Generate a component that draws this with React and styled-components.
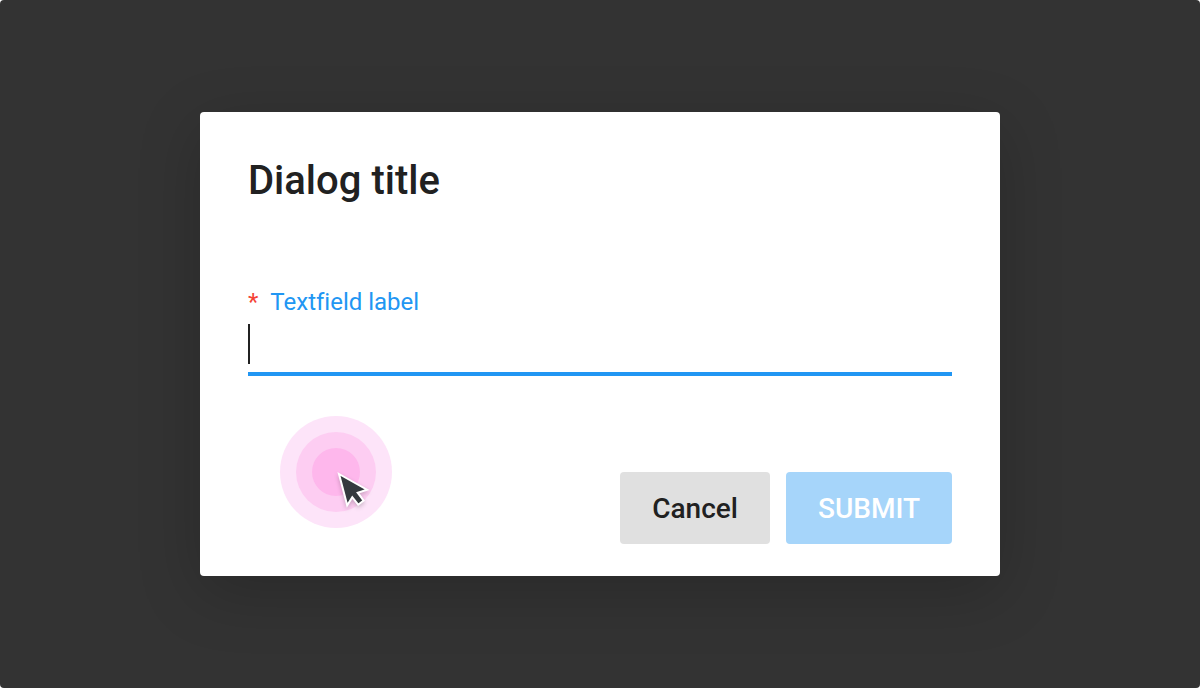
import React from "react";
import styled, { createGlobalStyle } from "styled-components";

const GlobalStyle = createGlobalStyle`
  *, *::before, *::after { box-sizing: border-box; }
  body {
    margin: 0;
    background: #fff;
    font-family: Roboto, "Liberation Sans", sans-serif;
    font-variant-ligatures: none;
    color: #212121;
  }
`;

const Backdrop = styled.main`
  display: flex;
  align-items: center;
  justify-content: center;
  min-height: 100vh;
  padding: 48px;
  border-radius: 4px;
  background: #333;
`;

const Dialog = styled.form`
  position: relative;
  display: flex;
  flex-direction: column;
  width: 100%;
  max-width: 800px;
  padding: 40px 48px 32px;
  border-radius: 4px;
  background: #fff;
  box-shadow: 0 16px 64px rgba(0, 0, 0, 0.2);
`;

const Title = styled.h1`
  margin: 0 0 78px;
  font-size: 40px;
  line-height: 58px;
  font-weight: 500;
`;

const Field = styled.div`
  display: flex;
  flex-direction: column;
  gap: 8px;
  margin-bottom: 96px;
`;

const Label = styled.label`
  display: flex;
  gap: 12px;
  font-size: 24px;
  line-height: 28px;
  color: #2196f3;
`;

const Required = styled.span`
  color: #f44336;
`;

const InputRow = styled.div`
  display: flex;
  padding-bottom: 8px;
  border-bottom: 4px solid #2196f3;
`;

const Caret = styled.span`
  width: 2px;
  height: 40px;
  background: #212121;
`;

const Input = styled.input`
  flex: 1;
  min-width: 0;
  height: 40px;
  padding: 0;
  border: 0;
  outline: 0;
  background: transparent;
  font: inherit;
  font-size: 32px;
  color: inherit;
  caret-color: transparent;
`;

const Actions = styled.div`
  display: flex;
  justify-content: flex-end;
  gap: 16px;
`;

const Button = styled.button`
  padding: 20px 32px 18px;
  border: 0;
  border-radius: 4px;
  background: ${({ $primary }) => ($primary ? "#a6d5fa" : "#e0e0e0")};
  color: ${({ $primary }) => ($primary ? "#fff" : "#212121")};
  font-family: inherit;
  font-size: 28px;
  line-height: 34px;
  font-weight: 500;
`;

const Pointer = styled.svg`
  position: absolute;
  left: 80px;
  bottom: 48px;
  pointer-events: none;
`;

const PointerArrow = styled.path`
  filter: drop-shadow(0 2px 2px rgba(0, 0, 0, 0.2));
`;

function ClickPointer() {
  return (
    <Pointer width="112" height="112" viewBox="0 0 112 112" aria-hidden="true">
      <circle cx="56" cy="56" r="56" fill="#fde4f9" />
      <circle cx="56" cy="56" r="40" fill="#fdcdf2" />
      <circle cx="56" cy="56" r="24" fill="#feb7ec" />
      <PointerArrow
        d="M59 58 L87 73.7 L77.7 76.7 L83.6 84.6 L78.2 88.7 L72.3 81.2 L67.2 89.3 Z"
        fill="#343a3e"
        stroke="#fff"
        strokeWidth="2"
      />
    </Pointer>
  );
}

export default function App() {
  return (
    <>
      <GlobalStyle />
      <Backdrop>
        <Dialog
          role="dialog"
          aria-labelledby="dialog-title"
          onSubmit={(event) => event.preventDefault()}
        >
          <Title id="dialog-title">Dialog title</Title>
          <Field>
            <Label htmlFor="textfield">
              <Required>*</Required>
              <span>Textfield label</span>
            </Label>
            <InputRow>
              <Caret />
              <Input id="textfield" type="text" required />
            </InputRow>
          </Field>
          <Actions>
            <Button type="button">Cancel</Button>
            <Button type="submit" $primary disabled>
              SUBMIT
            </Button>
          </Actions>
          <ClickPointer />
        </Dialog>
      </Backdrop>
    </>
  );
}
